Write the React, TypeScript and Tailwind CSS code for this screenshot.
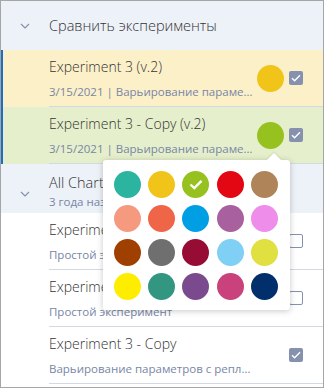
import React from 'react';

const palette = [
  ['#2bb5a0', '#f0c419', '#97c11f', '#e30613', '#b08459'],
  ['#f59a7e', '#ef6548', '#009fe3', '#a9609f', '#ee8eea'],
  ['#a04000', '#6f6f6f', '#960c35', '#80d0f5', '#e0e040'],
  ['#ffed00', '#339680', '#7b4a8e', '#c9427c', '#002f6c'],
];

const Chevron = () => (
  <svg width="10" height="6" viewBox="0 0 10 6" fill="none">
    <path d="M1 1l4 4 4-4" stroke="#8591ae" strokeWidth="1.2" />
  </svg>
);

const Checkbox = ({ checked }: { checked: boolean }) =>
  checked ? (
    <div className="w-[14px] h-[14px] rounded-[2px] bg-[#8591ae] flex items-center justify-center">
      <svg width="10" height="8" viewBox="0 0 10 8" fill="none">
        <path d="M1 4.2l2.6 2.5L9 1.2" stroke="#fff" strokeWidth="1.4" />
      </svg>
    </div>
  ) : (
    <div className="w-[14px] h-[14px] rounded-[2px] border border-[#8591ae] bg-white" />
  );

type Item = {
  title: string;
  sub: string;
  checked: boolean;
  bg?: string;
  dot?: string;
  active?: boolean;
};

const Row = ({ item }: { item: Item }) => (
  <div className={`relative h-[57px] pl-[48px] ${item.bg ?? 'bg-white'}`}>
    {item.active && <div className="absolute left-0 top-0 bottom-0 w-[2px] bg-[#1a6fc4]" />}
    <div className="h-full flex items-center border-b border-[#d3d9e4]">
      <div className="w-[205px] min-w-0 pt-[1px]">
        <div className="text-[14px] leading-[20px] text-[#333] font-light truncate">{item.title}</div>
        <div className="text-[11.5px] leading-[16px] text-[#7886a6] mt-[7px] truncate">{item.sub}</div>
      </div>
      <div className="ml-[2px] w-[28px] h-[28px] flex items-center justify-center">
        {item.dot && <div className="w-[27px] h-[27px] rounded-full" style={{ backgroundColor: item.dot }} />}
      </div>
      <div className="ml-[5px]">
        <Checkbox checked={item.checked} />
      </div>
    </div>
  </div>
);

const GroupHeader = ({ title, sub }: { title: string; sub?: string }) => (
  <div className="h-[49px] bg-[#edf1f8] flex items-center">
    <div className="w-[48px] flex justify-center">
      <div className={sub ? 'mt-[10px]' : ''}>
        <Chevron />
      </div>
    </div>
    <div className={sub ? 'mt-[6px]' : ''}>
      <div className="text-[14.5px] leading-[20px] text-[#333] font-light">{title}</div>
      {sub && <div className="text-[11.5px] leading-[16px] text-[#7886a6] mt-[1px]">{sub}</div>}
    </div>
  </div>
);

export default function App() {
  return (
    <div className="w-[324px] h-[388px] bg-white border border-[#a6a6a6] overflow-hidden relative" style={{ fontFamily: '"Open Sans", "Noto Sans", sans-serif' }}>
      <GroupHeader title="Сравнить эксперименты" />
      <Row item={{ title: 'Experiment 3 (v.2)', sub: '3/15/2021 | Варьирование параметров с репликациями', checked: true, bg: 'bg-[#fcf0c9]', dot: '#f0c419', active: true }} />
      <Row item={{ title: 'Experiment 3 - Copy (v.2)', sub: '3/15/2021 | Варьирование параметров с репликациями', checked: true, bg: 'bg-[#e5efcb]', dot: '#97c11f', active: true }} />
      <GroupHeader title="All Charts" sub="3 года назад" />
      <Row item={{ title: 'Experiment 1', sub: 'Простой эксперимент', checked: false }} />
      <Row item={{ title: 'Experiment 2', sub: 'Простой эксперимент', checked: false }} />
      <Row item={{ title: 'Experiment 3 - Copy', sub: 'Варьирование параметров с репликациями', checked: true }} />

      {/* color picker popover */}
      <div className="absolute left-[102px] top-[159px] w-[187px] bg-white rounded-[3px] shadow-[0_1px_6px_rgba(0,0,0,0.22)] pt-[11px] pb-[10px] pl-[11px]">
        <div className="absolute -top-[5px] left-[166px] w-[10px] h-[10px] bg-white rotate-45 shadow-[-1px_-1px_2px_rgba(0,0,0,0.08)]" />
        <div className="relative grid grid-cols-5 gap-[7px] w-[164px]">
          {palette.flat().map((c, i) => (
            <div key={i} className="w-[27px] h-[27px] rounded-full flex items-center justify-center" style={{ backgroundColor: c }}>
              {c === '#97c11f' && (
                <svg width="14" height="11" viewBox="0 0 14 11" fill="none">
                  <path d="M1.5 5.5l3.8 3.6L12.5 1.8" stroke="#fff" strokeWidth="2.4" />
                </svg>
              )}
            </div>
          ))}
        </div>
      </div>
    </div>
  );
}
